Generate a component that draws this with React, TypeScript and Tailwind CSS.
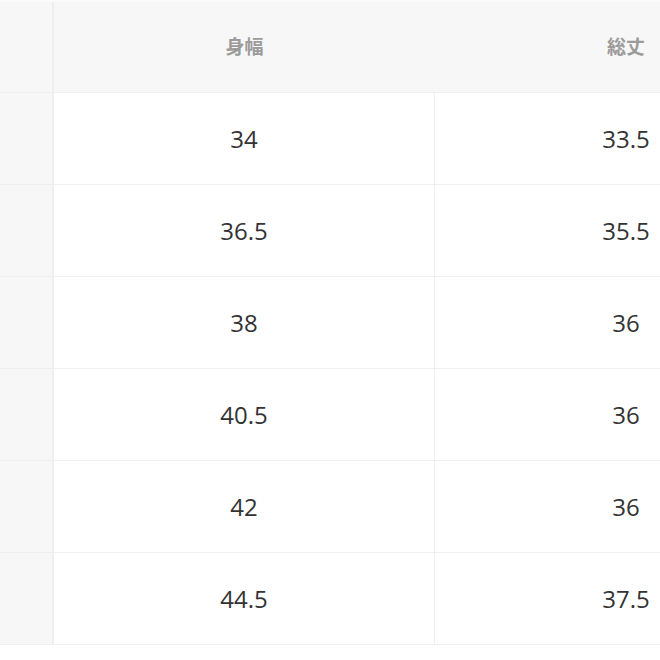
import React from "react";

const rows = [
  ["34", "33.5"],
  ["36.5", "35.5"],
  ["38", "36"],
  ["40.5", "36"],
  ["42", "36"],
  ["44.5", "37.5"],
];

const App = () => {
  return (
    <div className="w-[660px] h-[660px] overflow-hidden bg-white">
      <div
        className="w-[900px]"
        style={{ fontFamily: '"Open Sans", "Noto Sans CJK JP", sans-serif' }}
      >
        {/* Header */}
        <div className="flex h-[93px] border-b border-[#efefef] bg-[#f7f7f7] border-t-2 border-t-[#fbfbfb]">
          <div className="w-[54px] shrink-0 border-r-2 border-[#efefef]" />
          <div className="w-[381px] shrink-0 flex items-center justify-center text-[19px] font-bold text-[#9b9b9b]">
            身幅
          </div>
          <div className="w-[382px] shrink-0 flex items-center justify-center text-[19px] font-bold text-[#9b9b9b]">
            総丈
          </div>
        </div>

        {/* Body rows */}
        {rows.map(([width, length], i) => (
          <div key={i} className="flex h-[92px] border-b border-[#efefef]">
            <div className="w-[54px] shrink-0 bg-[#f7f7f7] border-r-2 border-[#efefef]" />
            <div className="w-[381px] shrink-0 flex items-center justify-center text-[24px] text-[#333333] border-r border-[#efefef]">
              {width}
            </div>
            <div className="w-[382px] shrink-0 flex items-center justify-center text-[24px] text-[#333333]">
              {length}
            </div>
          </div>
        ))}
      </div>
    </div>
  );
};

export default App;
